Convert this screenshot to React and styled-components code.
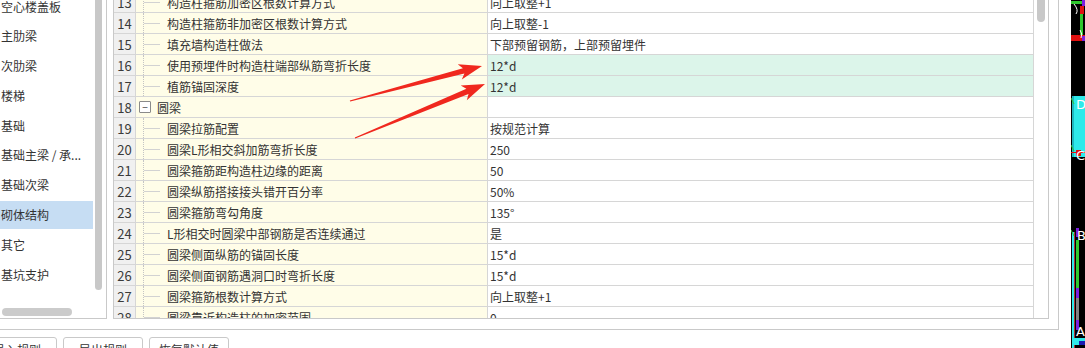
import React from 'react'
import styled, { createGlobalStyle } from 'styled-components'

const GlobalStyle = createGlobalStyle`
  html, body {
    margin: 0;
    padding: 0;
    background: #fff;
    overflow: hidden;
  }
  body {
    font-family: "Noto Sans CJK SC", "Noto Sans", sans-serif;
    font-size: 12px;
    color: #333;
  }
`

const categories = [
  '空心楼盖板',
  '主肋梁',
  '次肋梁',
  '楼梯',
  '基础',
  '基础主梁 / 承...',
  '基础次梁',
  '砌体结构',
  '其它',
  '基坑支护',
]

const rules = [
  { no: 13, name: '构造柱箍筋加密区根数计算方式', value: '向上取整+1' },
  { no: 14, name: '构造柱箍筋非加密区根数计算方式', value: '向上取整-1' },
  { no: 15, name: '填充墙构造柱做法', value: '下部预留钢筋，上部预留埋件' },
  { no: 16, name: '使用预埋件时构造柱端部纵筋弯折长度', value: '12*d', changed: true },
  { no: 17, name: '植筋锚固深度', value: '12*d', changed: true },
  { no: 18, name: '圆梁', value: '', group: true },
  { no: 19, name: '圆梁拉筋配置', value: '按规范计算' },
  { no: 20, name: '圆梁L形相交斜加筋弯折长度', value: '250' },
  { no: 21, name: '圆梁箍筋距构造柱边缘的距离', value: '50' },
  { no: 22, name: '圆梁纵筋搭接接头错开百分率', value: '50%' },
  { no: 23, name: '圆梁箍筋弯勾角度', value: '135°' },
  { no: 24, name: 'L形相交时圆梁中部钢筋是否连续通过', value: '是' },
  { no: 25, name: '圆梁侧面纵筋的锚固长度', value: '15*d' },
  { no: 26, name: '圆梁侧面钢筋遇洞口时弯折长度', value: '15*d' },
  { no: 27, name: '圆梁箍筋根数计算方式', value: '向上取整+1' },
  { no: 28, name: '圆梁靠近构造柱的加密范围', value: '0' },
]

// red annotation arrow, thin tail widening into a head
function arrowPoints(x1, y1, x2, y2) {
  const dx = x2 - x1
  const dy = y2 - y1
  const len = Math.hypot(dx, dy)
  const ux = dx / len
  const uy = dy / len
  const nx = -uy
  const ny = ux
  const pt = (a, w) =>
    `${(x1 + ux * a + nx * w).toFixed(1)},${(y1 + uy * a + ny * w).toFixed(1)}`
  const head = 22
  return [
    pt(0, 0.6),
    pt(len - head + 3, 2.8),
    pt(len - head - 1, 8),
    pt(len, 0),
    pt(len - head - 1, -8),
    pt(len - head + 3, -2.8),
    pt(0, -0.6),
  ].join(' ')
}

export default function App() {
  return (
    <Page>
      <GlobalStyle />
      <Dialog>
        <Frame>
          <CategoryPanel>
            <PanelBody>
              <CategoryList>
                {categories.map((c) => (
                  <CategoryItem key={c} $active={c === '砌体结构'}>
                    {c}
                  </CategoryItem>
                ))}
              </CategoryList>
              <VScroll>
                <VThumb $height="298px" />
              </VScroll>
            </PanelBody>
            <HScroll>
              <HThumb />
            </HScroll>
          </CategoryPanel>

          <RuleTable>
            <RuleGrid>
              {rules.map((r) => (
                <RuleRow key={r.no}>
                  <NoCell>{r.no}</NoCell>
                  <NameCell>
                    {r.group ? (
                      <>
                        <Toggle>−</Toggle>
                        <GroupLabel>{r.name}</GroupLabel>
                      </>
                    ) : (
                      <>
                        <Connector />
                        <span>{r.name}</span>
                      </>
                    )}
                  </NameCell>
                  <ValueCell $changed={r.changed}>{r.value}</ValueCell>
                </RuleRow>
              ))}
            </RuleGrid>
            <TableScroll>
              <VThumb $height="38px" $width="8px" />
            </TableScroll>
          </RuleTable>
        </Frame>

        <ButtonRow>
          <Button>导入规则</Button>
          <Button>导出规则</Button>
          <Button>恢复默认值</Button>
        </ButtonRow>
      </Dialog>

      <CadView>
        <svg width="14" height="348" viewBox="0 0 14 348">
          <rect width="14" height="348" fill="#000" />
          <rect x="0" y="1" width="14" height="3" fill="#2ec82e" />
          <rect x="11" y="0" width="3" height="6" fill="#7a1fe0" />
          <rect x="9" y="6" width="3" height="30" fill="#2ec82e" />
          <rect x="9" y="6" width="4" height="8" fill="#e01010" />
          <path d="M3 4 Q8 10 5 14" stroke="#fff" strokeWidth="1" fill="none" />
          <rect x="0" y="35" width="14" height="6" fill="#e01010" />
          <rect x="11" y="36" width="3" height="5" fill="#7a1fe0" />
          <path d="M9 30 Q12 34 10 38" stroke="#fff" strokeWidth="1" fill="none" />

          <rect x="1" y="96" width="13" height="61" fill="#2eeaea" />
          <rect x="1" y="96" width="2" height="61" fill="#1fb8c0" />
          <text x="5" y="109" fill="#fff" fontSize="13" fontFamily="DejaVu Sans">D</text>
          <path d="M0 98 L3 104 M0 145 L3 151" stroke="#2ec82e" strokeWidth="1" />
          <rect x="0" y="152" width="14" height="1" fill="#e01010" />
          <rect x="5" y="150" width="5" height="6" fill="#e01010" />
          <text x="5" y="160" fill="#fff" fontSize="13" fontFamily="DejaVu Sans">C</text>

          <rect x="1" y="232" width="2" height="116" fill="#2eeaea" />
          <rect x="3" y="232" width="1" height="116" fill="#a33" />
          <path d="M0 230 L3 236" stroke="#2ec82e" strokeWidth="1" />
          <rect x="5" y="228" width="3" height="9" fill="#7a1fe0" />
          <text x="6" y="240" fill="#fff" fontSize="13" fontFamily="DejaVu Sans">B</text>
          <rect x="5" y="240" width="3" height="48" fill="#2ec82e" />
          <rect x="5" y="288" width="3" height="10" fill="#7a1fe0" />
          <rect x="5" y="298" width="3" height="22" fill="#808080" />
          <rect x="5" y="320" width="3" height="10" fill="#7a1fe0" />
          <text x="5" y="336" fill="#fff" fontSize="13" fontFamily="DejaVu Sans">A</text>
          <rect x="3" y="338" width="11" height="7" fill="#2eeaea" />
          <rect x="8" y="341" width="6" height="4" fill="#1b1bb0" />
        </svg>
      </CadView>

      <Annotations width="1085" height="348" viewBox="0 0 1085 348">
        <polygon points={arrowPoints(350, 101, 482, 66)} fill="#f0281e" />
        <polygon points={arrowPoints(355, 138, 485, 84)} fill="#f0281e" />
      </Annotations>
    </Page>
  )
}

const Page = styled.div`
  position: relative;
  display: flex;
  width: 1085px;
  height: 348px;
  overflow: hidden;
`

const Dialog = styled.div`
  flex: 0 0 1071px;
  display: flex;
  flex-direction: column;
  background: #fff;
`

const Frame = styled.div`
  box-sizing: border-box;
  width: 1069px;
  height: 340px;
  margin: -10px 0 0 -10px;
  border: 1px solid #c9c9c9;
  padding: 0 9px 10px 0;

  display: flex;
  gap: 6px;
`

const CategoryPanel = styled.div`
  box-sizing: border-box;
  flex: 0 0 116px;
  border: 1px solid #c9c9c9;

  display: flex;
  flex-direction: column;
`

const PanelBody = styled.div`
  flex: 1;
  min-height: 0;
  display: flex;
`

const CategoryList = styled.div`
  flex: 1;
  padding: 0 2px 0 0;
  overflow: hidden;
`

const CategoryItem = styled.div`
  height: 28px;
  margin-bottom: 1.8px;
  padding-left: 9px;

  display: flex;
  align-items: center;

  white-space: nowrap;
  font-size: 12px;
  color: #333;
  background: ${(p) => (p.$active ? '#c6ddf3' : 'transparent')};
`

const VScroll = styled.div`
  flex: 0 0 11px;
`

const VThumb = styled.div`
  width: ${(p) => p.$width || '7px'};
  height: ${(p) => p.$height};
  border-radius: 4px;
  background: #c8c8c8;
`

const HScroll = styled.div`
  height: 26px;
  box-sizing: border-box;
  padding: 16px 0 0 10px;
`

const HThumb = styled.div`
  width: 70px;
  height: 8px;
  border-radius: 4px;
  background: #cbcbcb;
`

const RuleTable = styled.div`
  box-sizing: border-box;
  flex: 1;
  border: 1px solid #c9c9c9;

  display: flex;
  overflow: hidden;
`

const RuleGrid = styled.div`
  flex: 0 0 920px;
  overflow: hidden;
`

const RuleRow = styled.div`
  display: grid;
  grid-template-columns: 22px 352px 546px;
  height: 21px;

  > div {
    box-sizing: border-box;
    height: 21px;
    border-right: 1px solid #d6d6d6;
    border-bottom: 1px solid #d6d6d6;
    white-space: nowrap;
    overflow: hidden;
  }
`

const NoCell = styled.div`
  background: #f0f0f0;
  display: flex;
  align-items: center;
  justify-content: center;
  font-size: 13px;
  color: #3a3a3a;
`

const NameCell = styled.div`
  background: #fffde8;
  display: flex;
  align-items: center;
  font-size: 12px;
  color: #333;
`

const Connector = styled.span`
  position: relative;
  flex: 0 0 31px;
  align-self: stretch;

  &::before {
    content: '';
    position: absolute;
    left: 7px;
    top: 0;
    bottom: 0;
    border-left: 1px dotted #c4c4c4;
  }

  &::after {
    content: '';
    position: absolute;
    left: 8px;
    width: 16px;
    top: 50%;
    border-top: 1px solid #d2d2d2;
  }
`

const Toggle = styled.span`
  box-sizing: border-box;
  flex: none;
  width: 12px;
  height: 12px;
  margin-left: 3px;
  border: 1px solid #8a8a8a;
  border-radius: 1px;

  display: flex;
  align-items: center;
  justify-content: center;
  font-size: 10px;
  line-height: 1;
  color: #444;
  background: #fff;
`

const GroupLabel = styled.span`
  margin-left: 6px;
`

const ValueCell = styled.div`
  padding-left: 2px;
  display: flex;
  align-items: center;
  font-size: 12px;
  color: #333;
  background: ${(p) => (p.$changed ? '#dcf5ea' : '#fff')};
`

const TableScroll = styled.div`
  flex: 0 0 14px;
  padding-left: 3px;
  box-sizing: border-box;
  margin-top: -8px;
`

const ButtonRow = styled.div`
  display: flex;
  gap: 6px;
  margin: 7px 0 0 -23px;
`

const Button = styled.button`
  flex: none;
  width: 80px;
  height: 25px;
  padding: 0;
  border: 1px solid #c9c9c9;
  border-radius: 3px;
  background: #fff;
  font-family: "Noto Sans CJK SC", "Noto Sans", sans-serif;
  font-size: 12px;
  color: #333;
`

const CadView = styled.div`
  flex: 1;
  background: #000;
  display: flex;
`

const Annotations = styled.svg`
  position: absolute;
  top: 0;
  left: 0;
  pointer-events: none;
`
